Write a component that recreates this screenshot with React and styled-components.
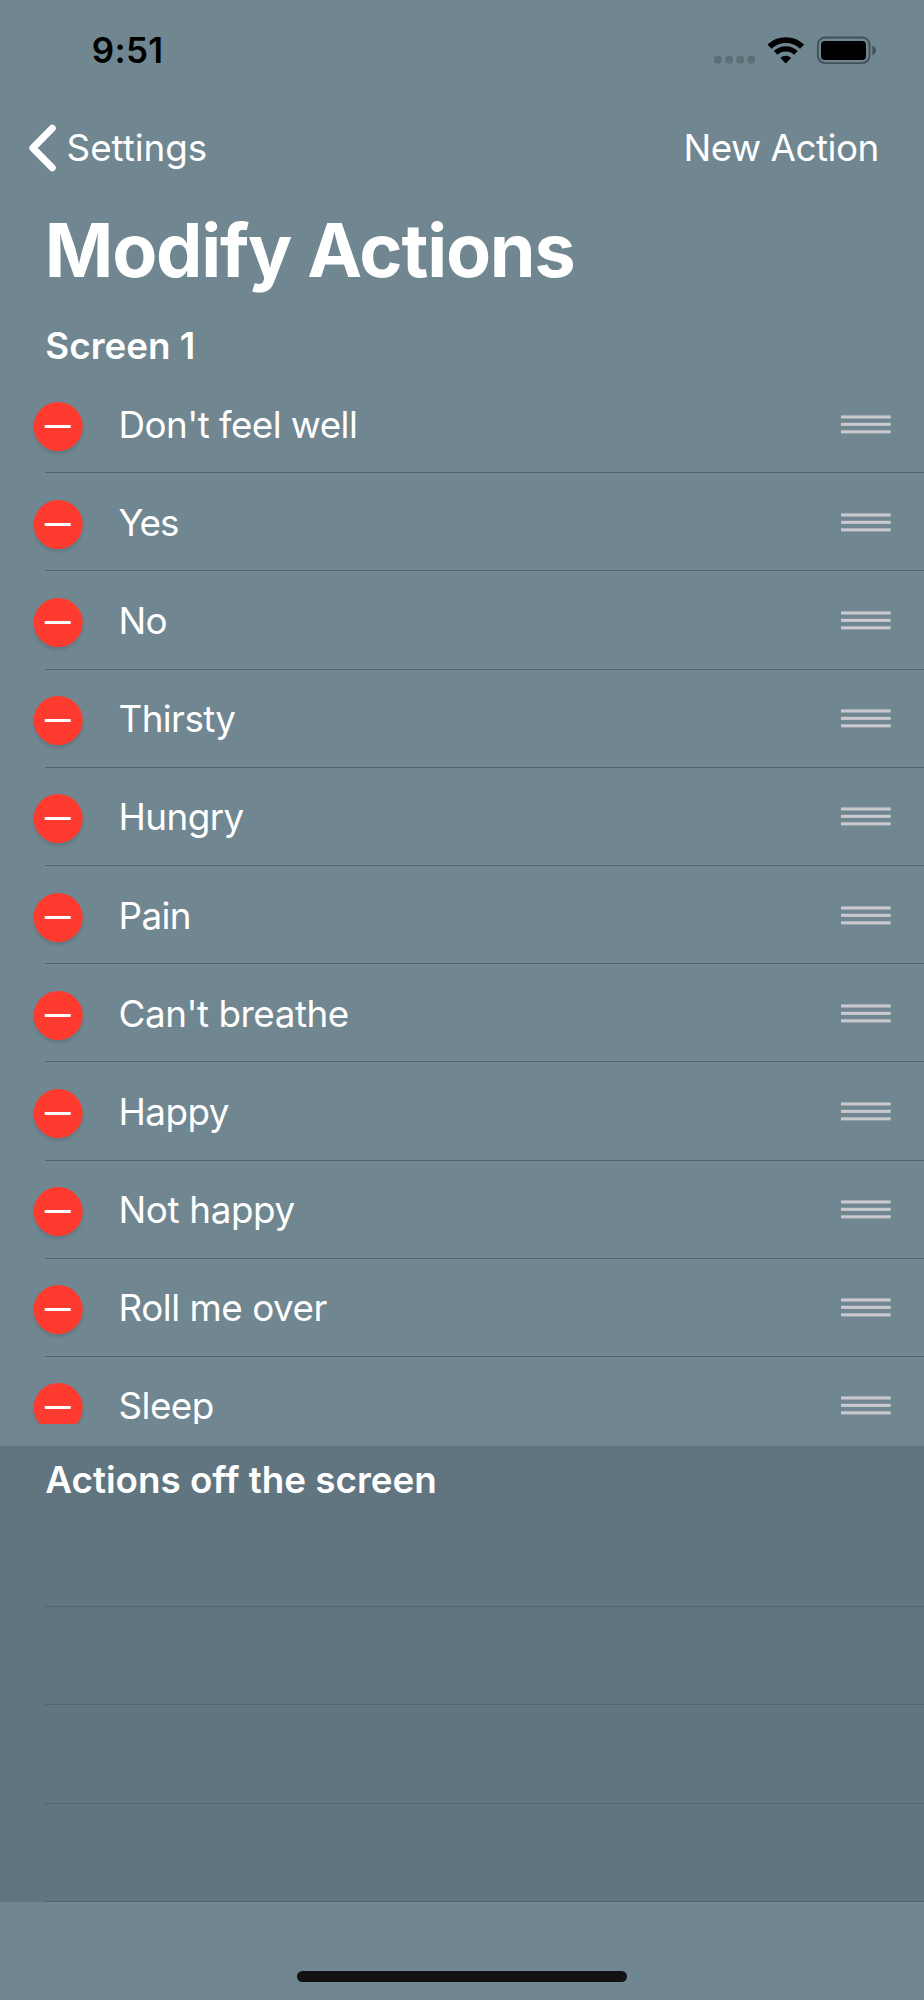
import React from 'react';
import styled, { createGlobalStyle } from 'styled-components';

const actions = [
  { title: "Don't feel well", tracking: -0.56 },
  { title: 'Yes', tracking: -1.1 },
  { title: 'No', tracking: -0.6 },
  { title: 'Thirsty', tracking: -0.6 },
  { title: 'Hungry', tracking: -0.55 },
  { title: 'Pain', tracking: -0.6 },
  { title: "Can't breathe", tracking: -0.45 },
  { title: 'Happy', tracking: -0.5 },
  { title: 'Not happy', tracking: -0.36 },
  { title: 'Roll me over', tracking: -0.47 },
  { title: 'Sleep', tracking: -0.55 },
];
const emptyRows = [1, 2, 3, 4];

const StatusIcons = () => (
  <StatusSvg width="164" height="30" viewBox="714 35 164 30">
    <g fill="#5c6f77">
      <rect x="714" y="56" width="7.8" height="7.4" rx="2.4" />
      <rect x="725.2" y="56" width="7.8" height="7.4" rx="2.4" />
      <rect x="736.3" y="56" width="7.8" height="7.4" rx="2.4" />
      <rect x="747.5" y="56" width="7.8" height="7.4" rx="2.4" />
    </g>
    <g fill="none" stroke="#000">
      <path d="M769.5 46.7 A23.5 23.5 0 0 1 802.1 46.7" strokeWidth="5.8" />
      <path d="M775.7 52.9 A14.6 14.6 0 0 1 795.9 52.9" strokeWidth="5.4" />
    </g>
    <path d="M785.8 63.4 L780.4 57.9 A7.8 7.8 0 0 1 791.2 57.9 Z" />
    <rect x="817.9" y="37.5" width="51.6" height="25.6" rx="7.2" fill="none" stroke="#43525a" strokeWidth="1.9" />
    <rect x="821" y="41" width="45" height="19" rx="4" />
    <path d="M872.4 45.6 C877.2 47.6 877.2 53.4 872.4 55.4 Z" fill="#43525a" />
  </StatusSvg>
)

const BackIcon = () => (
  <svg width="30" height="50" viewBox="28 122.7 30 50">
    <path d="M52.3 127.9 L32.8 147.7 L52.3 167.4" fill="none" stroke="#fff" strokeWidth="7" strokeLinecap="round" strokeLinejoin="round" />
  </svg>
)

const ReorderIcon = () => (
  <Handle width="50" height="19" viewBox="0 0 50 19">
    <rect x="0" y="0.4" width="49.7" height="3.1" />
    <rect x="0" y="7.8" width="49.7" height="3.1" />
    <rect x="0" y="15.3" width="49.7" height="3.1" />
  </Handle>
)

const App = () => {
  return (
    <Screen>
      <GlobalStyle />
      <StatusBar>
        <Time>9:51</Time>
        <StatusIcons />
      </StatusBar>
      <NavBar>
        <BackButton>
          <BackIcon />
          <span>Settings</span>
        </BackButton>
        <NavButton>New Action</NavButton>
      </NavBar>
      <Title>Modify Actions</Title>
      <SectionHeader>Screen 1</SectionHeader>
      <ActionsList>
        {actions.map(action => (
          <Row key={action.title}>
            <DeleteButton aria-label={`Delete ${action.title}`} />
            <RowTitle $tracking={action.tracking}>{action.title}</RowTitle>
            <ReorderIcon />
          </Row>
        ))}
      </ActionsList>
      <OffScreen>
        <SectionHeader>Actions off the screen</SectionHeader>
        {emptyRows.map(row => <Row key={row} />)}
      </OffScreen>
      <HomeIndicator />
    </Screen>
  )
}

export default App

const GlobalStyle = createGlobalStyle`
* { box-sizing: border-box; }
body {
  margin: 0;
  background: #708690;
}
`
const Screen = styled.div`
display: flex;
flex-direction: column;
width: 924px;
height: 2000px;
overflow: hidden;
background: #708690;
color: white;
font-family: Inter, sans-serif;
font-size: 36.8px;
line-height: 50px;
`
const StatusBar = styled.header`
display: flex;
justify-content: space-between;
align-items: center;
height: 100px;
padding: 0 46px 0 91.8px;
color: black;
`
const Time = styled.div`
font-size: 35px;
font-weight: 600;
letter-spacing: 0.3px;
`
const StatusSvg = styled.svg`
display: block;
`
const NavBar = styled.nav`
display: flex;
justify-content: space-between;
align-items: center;
height: 95px;
padding: 0 45.3px 0 28px;
`
const BackButton = styled.div`
display: flex;
align-items: center;
gap: 8.6px;
letter-spacing: -0.05px;
`
const NavButton = styled.div`
letter-spacing: -0.5px;
`
const Title = styled.h1`
margin: 10.5px 0 16.5px;
padding-left: 44.8px;
font-size: 73.6px;
font-weight: 700;
line-height: 90px;
letter-spacing: -1.22px;
`
const SectionHeader = styled.h2`
display: flex;
align-items: center;
height: 63px;
margin: 0;
padding: 4px 0 0 45.3px;
font-size: 36.8px;
font-weight: 600;
`
// the list is cut in the middle of the last row
const ActionsList = styled.div`
height: 1049px;
margin-bottom: 22px;
overflow: hidden;
`
const Row = styled.div`
display: flex;
align-items: center;
height: 98.2px;
margin-left: 45px;
padding: 2px 33px 0 0;
border-bottom: 1px solid #50656f;
`
const DeleteButton = styled.button`
display: flex;
align-items: center;
justify-content: center;
flex: none;
width: 49px;
height: 49px;
margin: 3px 0 0 -11.3px;
padding: 0;
border: none;
border-radius: 50%;
background: #ff3b30;
box-shadow: 0 3px 3px rgba(0, 0, 0, 0.1);
transform: translateX(-0.3px);
&::before {
  content: '';
  width: 26px;
  height: 3px;
  background: white;
}
`
const RowTitle = styled.div`
flex: 1;
margin-left: 35.8px;
letter-spacing: ${props => props.$tracking}px;
`
const Handle = styled.svg`
flex: none;
margin-top: -1px;
fill: #c9c9ce;
`
const OffScreen = styled.section`
background: #607580;
`
const HomeIndicator = styled.div`
width: 330px;
height: 11px;
margin: 69px auto 0;
border-radius: 6px;
background: #121212;
`
